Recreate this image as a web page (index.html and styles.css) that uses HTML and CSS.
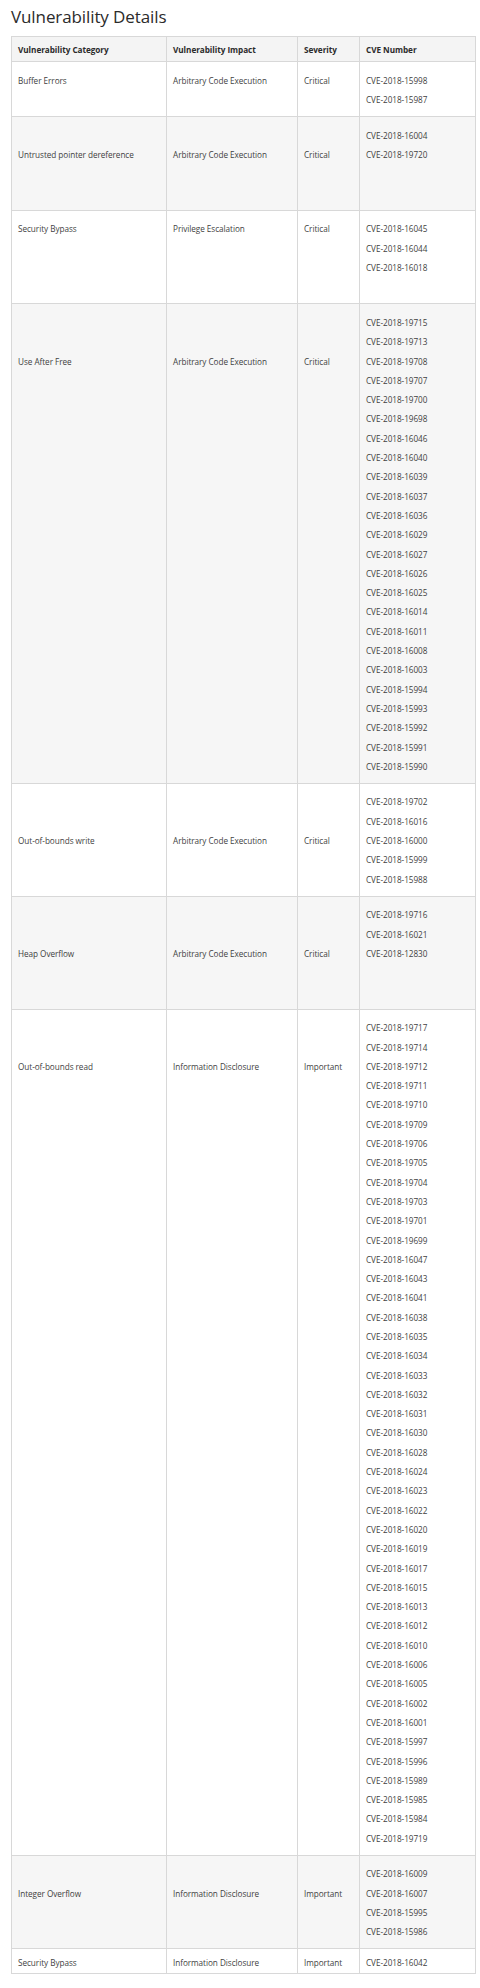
FILE: index.html
```html
<!DOCTYPE html>
<html lang="en">
<head>
<meta charset="utf-8">
<title>Vulnerability Details</title>
<link rel="stylesheet" href="styles.css">
</head>
<body>
<main class="page">
  <h1 class="title">Vulnerability Details</h1>
  <table class="vuln">
    <colgroup>
      <col class="c-cat"><col class="c-impact"><col class="c-sev"><col class="c-cve">
    </colgroup>
    <thead>
      <tr>
        <th>Vulnerability Category</th>
        <th>Vulnerability Impact</th>
        <th>Severity</th>
        <th>CVE Number</th>
      </tr>
    </thead>
    <tbody>
      <tr class="at-1">
        <td>Buffer Errors</td>
        <td>Arbitrary Code Execution</td>
        <td>Critical</td>
        <td class="cves">
          <div class="cve">CVE-2018-15998</div>
          <div class="cve">CVE-2018-15987</div>
        </td>
      </tr>
      <tr class="alt at-2">
        <td>Untrusted pointer dereference</td>
        <td>Arbitrary Code Execution</td>
        <td>Critical</td>
        <td class="cves">
          <div class="cve">CVE-2018-16004</div>
          <div class="cve">CVE-2018-19720</div>
          <div class="cve blank"></div>
          <div class="cve blank"></div>
        </td>
      </tr>
      <tr class="at-1">
        <td>Security Bypass</td>
        <td>Privilege Escalation</td>
        <td>Critical</td>
        <td class="cves">
          <div class="cve">CVE-2018-16045</div>
          <div class="cve">CVE-2018-16044</div>
          <div class="cve">CVE-2018-16018</div>
          <div class="cve blank"></div>
        </td>
      </tr>
      <tr class="alt at-3">
        <td>Use After Free</td>
        <td>Arbitrary Code Execution</td>
        <td>Critical</td>
        <td class="cves">
          <div class="cve">CVE-2018-19715</div>
          <div class="cve">CVE-2018-19713</div>
          <div class="cve">CVE-2018-19708</div>
          <div class="cve">CVE-2018-19707</div>
          <div class="cve">CVE-2018-19700</div>
          <div class="cve">CVE-2018-19698</div>
          <div class="cve">CVE-2018-16046</div>
          <div class="cve">CVE-2018-16040</div>
          <div class="cve">CVE-2018-16039</div>
          <div class="cve">CVE-2018-16037</div>
          <div class="cve">CVE-2018-16036</div>
          <div class="cve">CVE-2018-16029</div>
          <div class="cve">CVE-2018-16027</div>
          <div class="cve">CVE-2018-16026</div>
          <div class="cve">CVE-2018-16025</div>
          <div class="cve">CVE-2018-16014</div>
          <div class="cve">CVE-2018-16011</div>
          <div class="cve">CVE-2018-16008</div>
          <div class="cve">CVE-2018-16003</div>
          <div class="cve">CVE-2018-15994</div>
          <div class="cve">CVE-2018-15993</div>
          <div class="cve">CVE-2018-15992</div>
          <div class="cve">CVE-2018-15991</div>
          <div class="cve">CVE-2018-15990</div>
        </td>
      </tr>
      <tr class="at-3">
        <td>Out-of-bounds write</td>
        <td>Arbitrary Code Execution</td>
        <td>Critical</td>
        <td class="cves">
          <div class="cve">CVE-2018-19702</div>
          <div class="cve">CVE-2018-16016</div>
          <div class="cve">CVE-2018-16000</div>
          <div class="cve">CVE-2018-15999</div>
          <div class="cve">CVE-2018-15988</div>
        </td>
      </tr>
      <tr class="alt at-3">
        <td>Heap Overflow</td>
        <td>Arbitrary Code Execution</td>
        <td>Critical</td>
        <td class="cves">
          <div class="cve">CVE-2018-19716</div>
          <div class="cve">CVE-2018-16021</div>
          <div class="cve">CVE-2018-12830</div>
          <div class="cve blank"></div>
          <div class="cve blank"></div>
        </td>
      </tr>
      <tr class="at-3">
        <td>Out-of-bounds read</td>
        <td>Information Disclosure</td>
        <td>Important</td>
        <td class="cves">
          <div class="cve">CVE-2018-19717</div>
          <div class="cve">CVE-2018-19714</div>
          <div class="cve">CVE-2018-19712</div>
          <div class="cve">CVE-2018-19711</div>
          <div class="cve">CVE-2018-19710</div>
          <div class="cve">CVE-2018-19709</div>
          <div class="cve">CVE-2018-19706</div>
          <div class="cve">CVE-2018-19705</div>
          <div class="cve">CVE-2018-19704</div>
          <div class="cve">CVE-2018-19703</div>
          <div class="cve">CVE-2018-19701</div>
          <div class="cve">CVE-2018-19699</div>
          <div class="cve">CVE-2018-16047</div>
          <div class="cve">CVE-2018-16043</div>
          <div class="cve">CVE-2018-16041</div>
          <div class="cve">CVE-2018-16038</div>
          <div class="cve">CVE-2018-16035</div>
          <div class="cve">CVE-2018-16034</div>
          <div class="cve">CVE-2018-16033</div>
          <div class="cve">CVE-2018-16032</div>
          <div class="cve">CVE-2018-16031</div>
          <div class="cve">CVE-2018-16030</div>
          <div class="cve">CVE-2018-16028</div>
          <div class="cve">CVE-2018-16024</div>
          <div class="cve">CVE-2018-16023</div>
          <div class="cve">CVE-2018-16022</div>
          <div class="cve">CVE-2018-16020</div>
          <div class="cve">CVE-2018-16019</div>
          <div class="cve">CVE-2018-16017</div>
          <div class="cve">CVE-2018-16015</div>
          <div class="cve">CVE-2018-16013</div>
          <div class="cve">CVE-2018-16012</div>
          <div class="cve">CVE-2018-16010</div>
          <div class="cve">CVE-2018-16006</div>
          <div class="cve">CVE-2018-16005</div>
          <div class="cve">CVE-2018-16002</div>
          <div class="cve">CVE-2018-16001</div>
          <div class="cve">CVE-2018-15997</div>
          <div class="cve">CVE-2018-15996</div>
          <div class="cve">CVE-2018-15989</div>
          <div class="cve">CVE-2018-15985</div>
          <div class="cve">CVE-2018-15984</div>
          <div class="cve">CVE-2018-19719</div>
        </td>
      </tr>
      <tr class="alt at-2">
        <td>Integer Overflow</td>
        <td>Information Disclosure</td>
        <td>Important</td>
        <td class="cves">
          <div class="cve">CVE-2018-16009</div>
          <div class="cve">CVE-2018-16007</div>
          <div class="cve">CVE-2018-15995</div>
          <div class="cve">CVE-2018-15986</div>
        </td>
      </tr>
      <tr class="at-1 last">
        <td>Security Bypass</td>
        <td>Information Disclosure</td>
        <td>Important</td>
        <td class="cves">
          <div class="cve">CVE-2018-16042</div>
        </td>
      </tr>
    </tbody>
  </table>
</main>
</body>
</html>
```
FILE: styles.css
```css
html, body {
  margin: 0;
  padding: 0;
  background: #ffffff;
}

body {
  font-family: "Open Sans", "Liberation Sans", sans-serif;
  color: #3f3f3f;
}

.page {
  padding: 7px 0 0 11px;
}

.title {
  margin: 0 0 9px 0;
  font-size: 17px;
  line-height: 20px;
  font-weight: 400;
  color: #2b2b2b;
  letter-spacing: -0.1px;
}

.vuln {
  border-collapse: collapse;
  table-layout: fixed;
  width: 464px;
  font-size: 8.2px;
  letter-spacing: -0.05px;
  border: 1px solid #d0d0d0;
}

.c-cat { width: 155px; }
.c-impact { width: 131px; }
.c-sev { width: 62px; }
.c-cve { width: 116px; }

.vuln th,
.vuln td {
  border: 1px solid #d8d8d8;
  padding: 8.55px 6px 6.85px 6px;
  line-height: 19.3px;
  text-align: left;
  vertical-align: top;
  white-space: nowrap;
}

.vuln th {
  padding-top: 3.45px;
  padding-bottom: 1.55px;
  font-weight: 700;
  color: #2b2b2b;
  background: #f4f4f4;
}

.vuln tr.alt td {
  background: #f6f6f6;
}

.vuln .at-2 > td:not(.cves) {
  padding-top: 27.85px;
}

.vuln .at-3 > td:not(.cves) {
  padding-top: 47.15px;
}

.vuln tr.last > td {
  padding-top: 3.25px;
  padding-bottom: 0.85px;
}

.cve {
  height: 19.3px;
}
```
